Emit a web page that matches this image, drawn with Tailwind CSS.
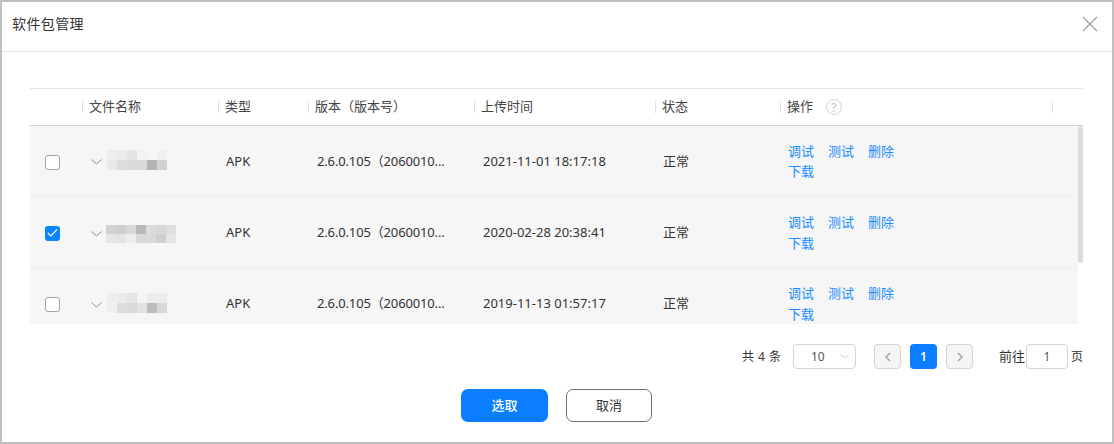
<!DOCTYPE html>
<html lang="zh-CN">
  <head>
    <meta charset="UTF-8" />
    <title>软件包管理</title>
    <script src="https://cdn.jsdelivr.net/npm/@tailwindcss/browser@4"></script>
  </head>
  <body class="bg-white">
    <div class="flex h-[444px] w-[1114px] flex-col border-2 border-[#bfbfbf] bg-white font-['Noto_Sans','Noto_Sans_CJK_SC',sans-serif] text-[13px] text-[#333]">
      <!-- Header -->
      <div class="flex h-[50px] shrink-0 items-center justify-between border-b border-[#e4e4e4] pr-[14px] pb-[5px] pl-[10px]">
        <span class="text-[14px] leading-5 tracking-[0.4px]">软件包管理</span>
        <svg class="h-[16px] w-[16px]" viewBox="0 0 16 16" fill="none" stroke="#9a9aa0" stroke-width="1.2"><path d="M1 1l14 14M15 1L1 15" /></svg>
      </div>

      <!-- Table -->
      <div class="mt-[36px] ml-[28px] w-[1053px]">
        <div class="flex h-[38px] items-center border-t border-b border-t-[#e4e4e4] border-b-[#d2d2d2] text-[#444]">
          <div class="w-[52px]"></div>
          <div class="flex w-[136px] items-center"><i class="mr-[6px] h-[12px] w-px bg-[#e0e0e0]"></i>文件名称</div>
          <div class="flex w-[90px] items-center"><i class="mr-[6px] h-[12px] w-px bg-[#e0e0e0]"></i>类型</div>
          <div class="flex w-[166px] items-center"><i class="mr-[6px] h-[12px] w-px bg-[#e0e0e0]"></i>版本（版本号）</div>
          <div class="flex w-[181px] items-center"><i class="mr-[6px] h-[12px] w-px bg-[#e0e0e0]"></i>上传时间</div>
          <div class="flex w-[125px] items-center"><i class="mr-[6px] h-[12px] w-px bg-[#e0e0e0]"></i>状态</div>
          <div class="flex w-[272px] items-center">
            <i class="mr-[6px] h-[12px] w-px bg-[#e0e0e0]"></i>操作
            <span class="ml-[13px] flex h-[16px] w-[16px] items-center justify-center rounded-full border-[1.5px] border-[#d4d4d4] text-[13px] leading-none font-semibold text-[#cfcfcf]">?</span>
          </div>
          <i class="h-[12px] w-px bg-[#e0e0e0]"></i>
        </div>

        <div class="relative h-[198px] overflow-hidden">
          <!-- Row 1 -->
          <div class="flex h-[71px] w-[1048px] items-center border-b border-[#eeeeee] bg-[#f6f6f6]">
            <div class="mt-[2px] flex w-[52px] pl-[15px]">
              <span class="h-[15px] w-[15px] rounded-[3px] border border-[#a0a3a8] bg-white"></span>
            </div>
            <div class="flex w-[136px] items-center pl-[9px]">
              <svg class="mt-[2px] mr-[5px] h-[6px] w-[11px]" viewBox="0 0 11 6" fill="none" stroke="#8f8f8f"><path d="M.5.5l5 4.5 5-4.5" /></svg>
              <div class="mb-[2px] grid grid-cols-[repeat(6,10px)] grid-rows-[repeat(2,10px)]">
                <i class="bg-[#eeeeee]"></i><i class="bg-[#ebebeb]"></i><i class="bg-[#e4e4e4]"></i><i class="bg-[#f3f3f3]"></i><i class="bg-[#f6f6f6]"></i><i class="bg-[#f0f0f0]"></i>
                <i class="bg-[#e9e9e9]"></i><i class="bg-[#dddddd]"></i><i class="bg-[#d9d9d9]"></i><i class="bg-[#d9d9d9]"></i><i class="bg-[#b4b4b4]"></i><i class="bg-[#d2d2d2]"></i>
              </div>
            </div>
            <div class="mt-[2px] w-[90px] pl-[8px]">APK</div>
            <div class="mt-[2px] w-[166px] pl-[9px] tracking-[-0.15px] whitespace-nowrap">2.6.0.105（2060010...</div>
            <div class="mt-[2px] w-[181px] pl-[9px]">2021-11-01 18:17:18</div>
            <div class="mt-[2px] w-[125px] pl-[8px]">正常</div>
            <div class="w-[272px] self-start pt-[15px] pl-[8px] leading-[20px] text-[#1a8cff]">
              <div class="flex gap-[14px]"><span>调试</span><span>测试</span><span>删除</span></div>
              <div>下载</div>
            </div>
          </div>

          <!-- Row 2 -->
          <div class="flex h-[72px] w-[1048px] items-center border-b border-[#eeeeee] bg-[#f6f6f6]">
            <div class="mt-[1px] flex w-[52px] pl-[15px]">
              <span class="flex h-[15px] w-[15px] items-center justify-center rounded-[3px] bg-[#0a84ff]">
                <svg class="h-[8px] w-[11px]" viewBox="0 0 11 8" fill="none" stroke="#fff" stroke-width="1.1"><path d="M.8 4l3 3 6.2-6.5" /></svg>
              </span>
            </div>
            <div class="flex w-[136px] items-center pl-[9px]">
              <svg class="mt-[2px] mr-[4px] h-[6px] w-[11px]" viewBox="0 0 11 6" fill="none" stroke="#8f8f8f"><path d="M.5.5l5 4.5 5-4.5" /></svg>
              <div class="mt-[2px] grid grid-cols-[repeat(7,10px)] grid-rows-[repeat(2,9px)]">
                <i class="bg-[#d2d2d2]"></i><i class="bg-[#cecece]"></i><i class="bg-[#d8d8d8]"></i><i class="bg-[#b8b8b8]"></i><i class="bg-[#dcdcdc]"></i><i class="bg-[#d8d8d8]"></i><i class="bg-[#dedede]"></i>
                <i class="bg-[#e6e6e6]"></i><i class="bg-[#e4e4e4]"></i><i class="bg-[#ededed]"></i><i class="bg-[#d8d8d8]"></i><i class="bg-[#dadada]"></i><i class="bg-[#d0d0d0]"></i><i class="bg-[#e4e4e4]"></i>
              </div>
            </div>
            <div class="w-[90px] pl-[8px]">APK</div>
            <div class="w-[166px] pl-[9px] tracking-[-0.15px] whitespace-nowrap">2.6.0.105（2060010...</div>
            <div class="w-[181px] pl-[9px]">2020-02-28 20:38:41</div>
            <div class="w-[125px] pl-[8px]">正常</div>
            <div class="w-[272px] self-start pt-[15px] pl-[8px] leading-[20.5px] text-[#1a8cff]">
              <div class="flex gap-[14px]"><span>调试</span><span>测试</span><span>删除</span></div>
              <div>下载</div>
            </div>
          </div>

          <!-- Row 3 -->
          <div class="flex h-[71px] w-[1048px] items-center bg-[#f6f6f6]">
            <div class="flex w-[52px] pl-[15px]">
              <span class="h-[15px] w-[15px] rounded-[3px] border border-[#a0a3a8] bg-white"></span>
            </div>
            <div class="flex w-[136px] items-center pl-[9px]">
              <svg class="mr-[5px] h-[6px] w-[11px]" viewBox="0 0 11 6" fill="none" stroke="#8f8f8f"><path d="M.5.5l5 4.5 5-4.5" /></svg>
              <div class="mb-[3px] grid grid-cols-[repeat(6,10px)] grid-rows-[repeat(2,10px)]">
                <i class="bg-[#eeeeee]"></i><i class="bg-[#ebebeb]"></i><i class="bg-[#e4e4e4]"></i><i class="bg-[#f3f3f3]"></i><i class="bg-[#ececec]"></i><i class="bg-[#ececec]"></i>
                <i class="bg-[#f0f0f0]"></i><i class="bg-[#dddddd]"></i><i class="bg-[#d9d9d9]"></i><i class="bg-[#e2e2e2]"></i><i class="bg-[#bcbcbc]"></i><i class="bg-[#d8d8d8]"></i>
              </div>
            </div>
            <div class="mb-[2px] w-[90px] pl-[8px]">APK</div>
            <div class="mb-[2px] w-[166px] pl-[9px] tracking-[-0.15px] whitespace-nowrap">2.6.0.105（2060010...</div>
            <div class="mb-[2px] w-[181px] pl-[9px]">2019-11-13 01:57:17</div>
            <div class="mb-[2px] w-[125px] pl-[8px]">正常</div>
            <div class="w-[272px] self-start pt-[14px] pl-[8px] leading-[20.5px] text-[#1a8cff]">
              <div class="flex gap-[14px]"><span>调试</span><span>测试</span><span>删除</span></div>
              <div>下载</div>
            </div>
          </div>

          <!-- Scrollbar -->
          <div class="absolute top-0 right-0 h-[137px] w-[5px] rounded-[3px] bg-[#dcdcde]"></div>
        </div>

        <!-- Pagination -->
        <div class="mt-[20px] flex h-[25px] items-center text-[12px] whitespace-nowrap">
          <span class="ml-[712px] w-[38px] shrink-0 tracking-[0.5px]">共 4 条</span>
          <div class="ml-[13px] flex h-[25px] w-[63px] items-center justify-between rounded-[4px] border border-[#d4d4d4] pr-[6px] pl-[17px] text-[#555]">
            <span>10</span>
            <svg class="h-[5px] w-[9px]" viewBox="0 0 9 5" fill="none" stroke="#c8c8c8"><path d="M.5.5l4 3.5 4-3.5" /></svg>
          </div>
          <span class="ml-[18px] flex h-[25px] w-[27px] items-center justify-center rounded-[4px] border border-[#d4d4d4] bg-[#f5f5f5]">
            <svg class="h-[10px] w-[6px]" viewBox="0 0 6 10" fill="none" stroke="#999" stroke-width="1.2"><path d="M5 .8L1 5l4 4.2" /></svg>
          </span>
          <span class="ml-[9px] flex h-[25px] w-[27px] items-center justify-center rounded-[4px] bg-[#0a7eff] font-semibold text-white">1</span>
          <span class="ml-[9px] flex h-[25px] w-[27px] items-center justify-center rounded-[4px] border border-[#d4d4d4] bg-[#f5f5f5]">
            <svg class="h-[10px] w-[6px]" viewBox="0 0 6 10" fill="none" stroke="#999" stroke-width="1.2"><path d="M1 .8L5 5 1 9.2" /></svg>
          </span>
          <span class="ml-[26px] w-[26px] shrink-0 text-[13px]">前往</span>
          <span class="ml-[1px] flex h-[25px] w-[42px] items-center justify-center rounded-[4px] border border-[#d4d4d4] text-[#555]">1</span>
          <span class="ml-[3px]">页</span>
        </div>
      </div>

      <!-- Footer -->
      <div class="mt-[20px] ml-[459px] flex gap-[18px]">
        <button class="h-[33px] w-[87px] rounded-[7px] bg-[#0a7eff] font-medium text-white">选取</button>
        <button class="h-[33px] w-[86px] rounded-[7px] border border-[#707070] text-[#333]">取消</button>
      </div>
    </div>
  </body>
</html>
